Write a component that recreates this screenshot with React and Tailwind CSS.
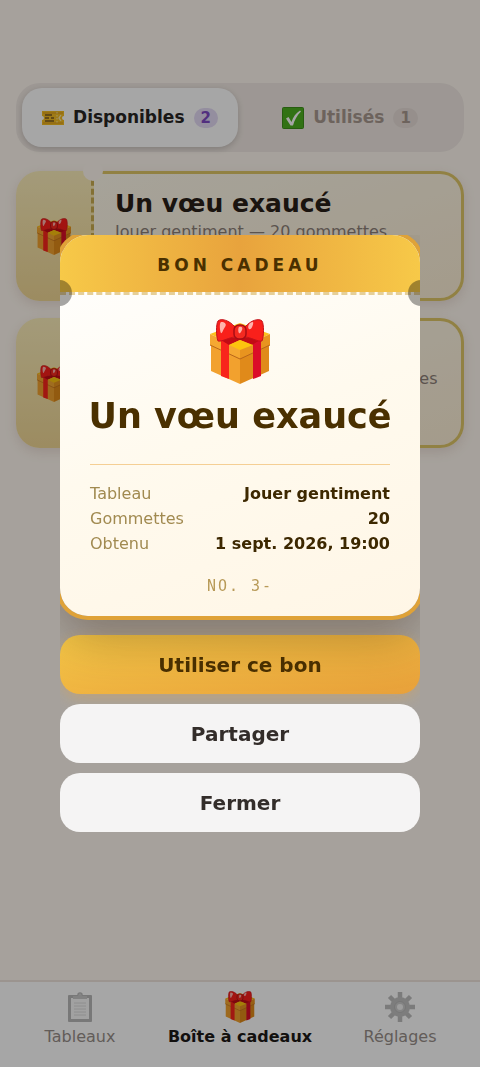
import clsx from "clsx";

const vouchers = [
  { id: 3, title: "Un vœu exaucé", detail: "Jouer gentiment — 20 gommettes" },
  { id: 2, title: "Un vœu exaucé", detail: "Ranger les chambres — 100 gommettes" },
];

const details = [
  { label: "Tableau", value: "Jouer gentiment" },
  { label: "Gommettes", value: "20" },
  { label: "Obtenu", value: "1 sept. 2026, 19:00" },
];

function GiftIcon({ className }) {
  return (
    <svg viewBox="0 0 60 65" className={className} aria-hidden="true">
      {/* Box */}
      <path d="M0 15 30 4l30 11L30 29z" fill="#fcc21b" />
      <path d="M1 25v27l29 13V38z" fill="#f2a12e" />
      <path d="M59 25v27L30 65V38z" fill="#e08a1a" />
      <path d="M0 15v11l30 14V29z" fill="#f5a832" />
      <path d="M60 15v11L30 40V29z" fill="#e8941f" />
      <path d="M0 26l30 14 30-14" fill="none" stroke="#b8661a" strokeWidth="1" />
      {/* Ribbon */}
      <path d="M11 19l8-2v43l-8-3z" fill="#f8251c" />
      <path d="M51 19l-8-2v43l8-3z" fill="#db0d28" />
      <path d="M11 21c6-4 32-4 39 0l-8 5-12-5-11 5z" fill="#c20b14" />
      <path d="M19 26l11-5 13 5-13 5z" fill="#fdc30f" />
      {/* Bow */}
      <path d="M25 8C19 1 11-1 8 2 6 5 6 17 8 22c4 1 12-4 17-4z" fill="#f9201b" stroke="#c3121a" strokeWidth="1" />
      <path d="M35 8c6-7 14-9 17-6 2 3 2 15 0 20-4 1-12-4-17-4z" fill="#f9201b" stroke="#c3121a" strokeWidth="1" />
      <rect x="24" y="6" width="12" height="14" rx="5" fill="#f42a20" stroke="#a80d14" strokeWidth="1.5" />
      <path d="M11 3c4 0 6 2 4 5s-3 7-4 6-2-10 0-11zM43 3c-4 0-6 5-4 7s5-5 4-7zM29 8c3-1 4 1 3 3s-2 4-3 3-1-5 0-6z" fill="#ffb3ac" />
    </svg>
  );
}

function TicketIcon() {
  return (
    <svg viewBox="0 0 22 14" className="h-[14px] w-[22px]" aria-hidden="true">
      <path d="M0 0h22v5a2 2 0 0 0 0 4v5H0V9a2 2 0 0 0 0-4z" fill="#f5bd23" />
      <path d="M1 2h20M1 12h20" stroke="#d99a1c" strokeWidth="1" />
      <path d="M3 4h7M3 7h4M9 7h3M3 10h9" stroke="#7a5a24" strokeWidth="1.3" />
      <path d="M15 1v12" stroke="#fce79a" strokeWidth="1" strokeDasharray="1.5 1.5" />
      <path d="M19 4l-2 3 2 3" fill="none" stroke="#fbe9ad" strokeWidth="1.3" />
    </svg>
  );
}

function CheckIcon() {
  return (
    <svg viewBox="0 0 22 22" className="size-[22px]" aria-hidden="true">
      <rect x="0.5" y="0.5" width="21" height="21" rx="1" fill="#4caf1f" stroke="#3d8f1a" strokeWidth="1" />
      <path d="M4 11.500 6.500 10l3 5C11 10 14 6 18 3.500l1 1C15 8.500 12.500 13 11 18.500H8.500z" fill="#fff" />
    </svg>
  );
}

function ClipboardIcon() {
  return (
    <svg viewBox="0 0 24 30" className="h-[30px] w-6" aria-hidden="true">
      <rect y="3" width="24" height="27" rx="1" fill="#8b8b8b" />
      <path d="M3 6h18v21H3z" fill="#f5f5f5" />
      <path d="M6 11h12M6 14h12M6 17h12M6 20h12M6 23h12" stroke="#c4c4c4" strokeWidth="1" />
      <path d="M5 4h5a2 2 0 1 1 4 0h5v3H5z" fill="#a5a5a5" />
      <path d="M10 3a2 2 0 1 1 4 0" fill="none" stroke="#8e8e8e" strokeWidth="1.5" />
    </svg>
  );
}

function GearIcon() {
  return (
    <svg viewBox="0 0 30 30" className="size-[30px]" aria-hidden="true">
      {/* Eight teeth, as four bars through the centre */}
      <path d="M15 0v30M0 15h30M4.500 4.500l21 21M25.500 4.500l-21 21" stroke="#929292" strokeWidth="4.500" strokeLinejoin="round" />
      <circle cx="15" cy="15" r="10" fill="#999" />
      <circle cx="15" cy="15" r="5.500" fill="#aaa" stroke="#868686" strokeWidth="1" />
      <circle cx="15" cy="15" r="3" fill="#e8e8e8" />
    </svg>
  );
}

const links = [
  { icon: <ClipboardIcon />, label: "Tableaux" },
  { icon: <GiftIcon className="h-8 w-[30px]" />, label: "Boîte à cadeaux", active: true },
  { icon: <GearIcon />, label: "Réglages" },
];

function Tab({ icon, label, count, active }) {
  return (
    <button
      type="button"
      className={clsx(
        "flex flex-1 items-center justify-center gap-[9px] rounded-[20px] h-[59px] text-[17px] font-bold",
        active ? "bg-white text-[#292524] shadow-[0_2px_6px_rgba(0,0,0,0.18)]" : "text-[#a8988f]"
      )}
    >
      {icon}
      <span>{label}</span>
      <span
        className={clsx(
          "rounded-full px-[7px] text-[15px] leading-5",
          active ? "bg-[#e4dbf5] text-[#7e4bc4]" : "bg-[#e6dcd8]"
        )}
      >
        {count}
      </span>
    </button>
  );
}

function VoucherCard({ title, detail }) {
  return (
    <li>
      <button
        type="button"
        className="relative flex w-full h-[130px] rounded-3xl text-left shadow-[0_4px_12px_rgba(120,80,60,0.15)]"
      >
        <span className="flex w-[78px] shrink-0 items-center justify-center rounded-l-3xl border-r-3 border-dashed border-[#c9ac50] bg-linear-to-b from-[#fbeebb] to-[#f0d795]">
          <GiftIcon className="h-[37px] w-[34px]" />
        </span>
        <span className="flex flex-1 flex-col rounded-r-3xl border-3 border-l-0 border-[#dfc668] bg-linear-to-br from-[#fffaec] to-[#fcefd6] pl-[21px] pt-[14px]">
          <span className="text-[25px] leading-8 font-bold text-[#292017]">{title}</span>
          <span className="text-base leading-6 whitespace-nowrap text-[#8d8078]">{detail}</span>
        </span>
        {/* Ticket notches */}
        <span className="absolute left-[67px] -top-[10px] size-5 rounded-full bg-[#fff8f0]" />
        <span className="absolute left-[67px] -bottom-[10px] size-5 rounded-full bg-[#fff8f0]" />
      </button>
    </li>
  );
}

function VoucherDialog() {
  return (
    <div className="fixed inset-0 z-50 flex items-center justify-center bg-black/35 p-6">
      <div
        role="dialog"
        aria-modal="true"
        aria-labelledby="voucher-title"
        className="flex max-h-full w-full max-w-[360px] flex-col overflow-y-auto"
      >
        <div className="relative z-10 mb-[19px] shrink-0 rounded-[28px] bg-linear-160 from-white via-[#fffaee] to-[#fff6e6] shadow-[0_0_0_4px_#dfa238,0_20px_50px_rgba(60,35,10,0.35)]">
          <div className="overflow-hidden rounded-[28px]">
            <div className="relative flex h-[60px] items-center justify-center border-b-3 border-dashed border-[#e6cf98] bg-linear-to-r from-[#f7c948] via-[#e8a33d] to-[#f7c948] bg-clip-padding pt-1">
              <span className="text-[17px] font-bold tracking-[4px] text-[#4a3000]">BON CADEAU</span>
              <span className="absolute -left-[14px] top-[45px] size-[26px] rounded-full bg-black/35" />
              <span className="absolute -right-[14px] top-[45px] size-[26px] rounded-full bg-black/35" />
            </div>
            <div className="flex flex-col items-center px-[30px] pt-6 pb-5">
              <GiftIcon className="h-[65px] w-[60px]" />
              <h2 id="voucher-title" className="mt-[10px] text-[35px] leading-[44px] font-bold whitespace-nowrap text-[#4a3000]">
                Un vœu exaucé
              </h2>
              <dl className="mt-[26px] w-full border-t border-[#f5cf94] pt-4 text-base leading-[25px]">
                {details.map(({ label, value }) => (
                  <div key={label} className="flex justify-between">
                    <dt className="text-[#a18a50]">{label}</dt>
                    <dd className="font-bold text-[#3d2800]">{value}</dd>
                  </div>
                ))}
              </dl>
              <p className="mt-5 font-['DejaVu_Sans_Mono',monospace] text-[15px] leading-5 tracking-[2px] text-[#b89a58]">
                NO. 3-
              </p>
            </div>
          </div>
        </div>
        <div className="flex flex-col gap-[10px] text-[20px] font-bold">
          <button
            type="button"
            className="h-[59px] shrink-0 rounded-[20px] bg-linear-to-br from-[#f7c948] to-[#e8a03a] text-[#4a3000] shadow-[0_4px_14px_rgba(232,163,61,0.35)]"
          >
            Utiliser ce bon
          </button>
          <button type="button" className="relative h-[59px] shrink-0 rounded-[20px] bg-[#f5f4f4] text-[#332d2a]">
            Partager
          </button>
          <button type="button" className="relative h-[59px] shrink-0 rounded-[20px] bg-[#f5f4f4] text-[#332d2a]">
            Fermer
          </button>
        </div>
      </div>
    </div>
  );
}

export default function App() {
  return (
    <div className="flex min-h-screen flex-col bg-[#fff8f0] font-['DejaVu_Sans',sans-serif]">
      <main className="flex-1 px-4 pt-[83px]">
        <div className="flex gap-1 rounded-3xl bg-[#f1e9e3] px-[6px] py-[5px]">
          <Tab icon={<TicketIcon />} label="Disponibles" count={2} active />
          <Tab icon={<CheckIcon />} label="Utilisés" count={1} />
        </div>
        <ul className="mt-[19px] flex flex-col gap-[17px]">
          {vouchers.map((voucher) => (
            <VoucherCard key={voucher.id} {...voucher} />
          ))}
        </ul>
      </main>

      {/* Bottom navigation */}
      <nav className="flex h-[87px] border-t-2 border-[#eee3dc] bg-white">
        {links.map(({ icon, label, active }) => (
          <a
            key={label}
            href="#"
            className={clsx(
              "flex flex-1 flex-col items-center gap-1 pt-[9px] text-base leading-5 whitespace-nowrap",
              active ? "font-bold text-[#1c1917]" : "text-[#978e89]"
            )}
          >
            <span className={clsx("flex h-8 items-center", !active && "opacity-60")}>{icon}</span>
            {label}
          </a>
        ))}
      </nav>

      <VoucherDialog />
    </div>
  );
}
